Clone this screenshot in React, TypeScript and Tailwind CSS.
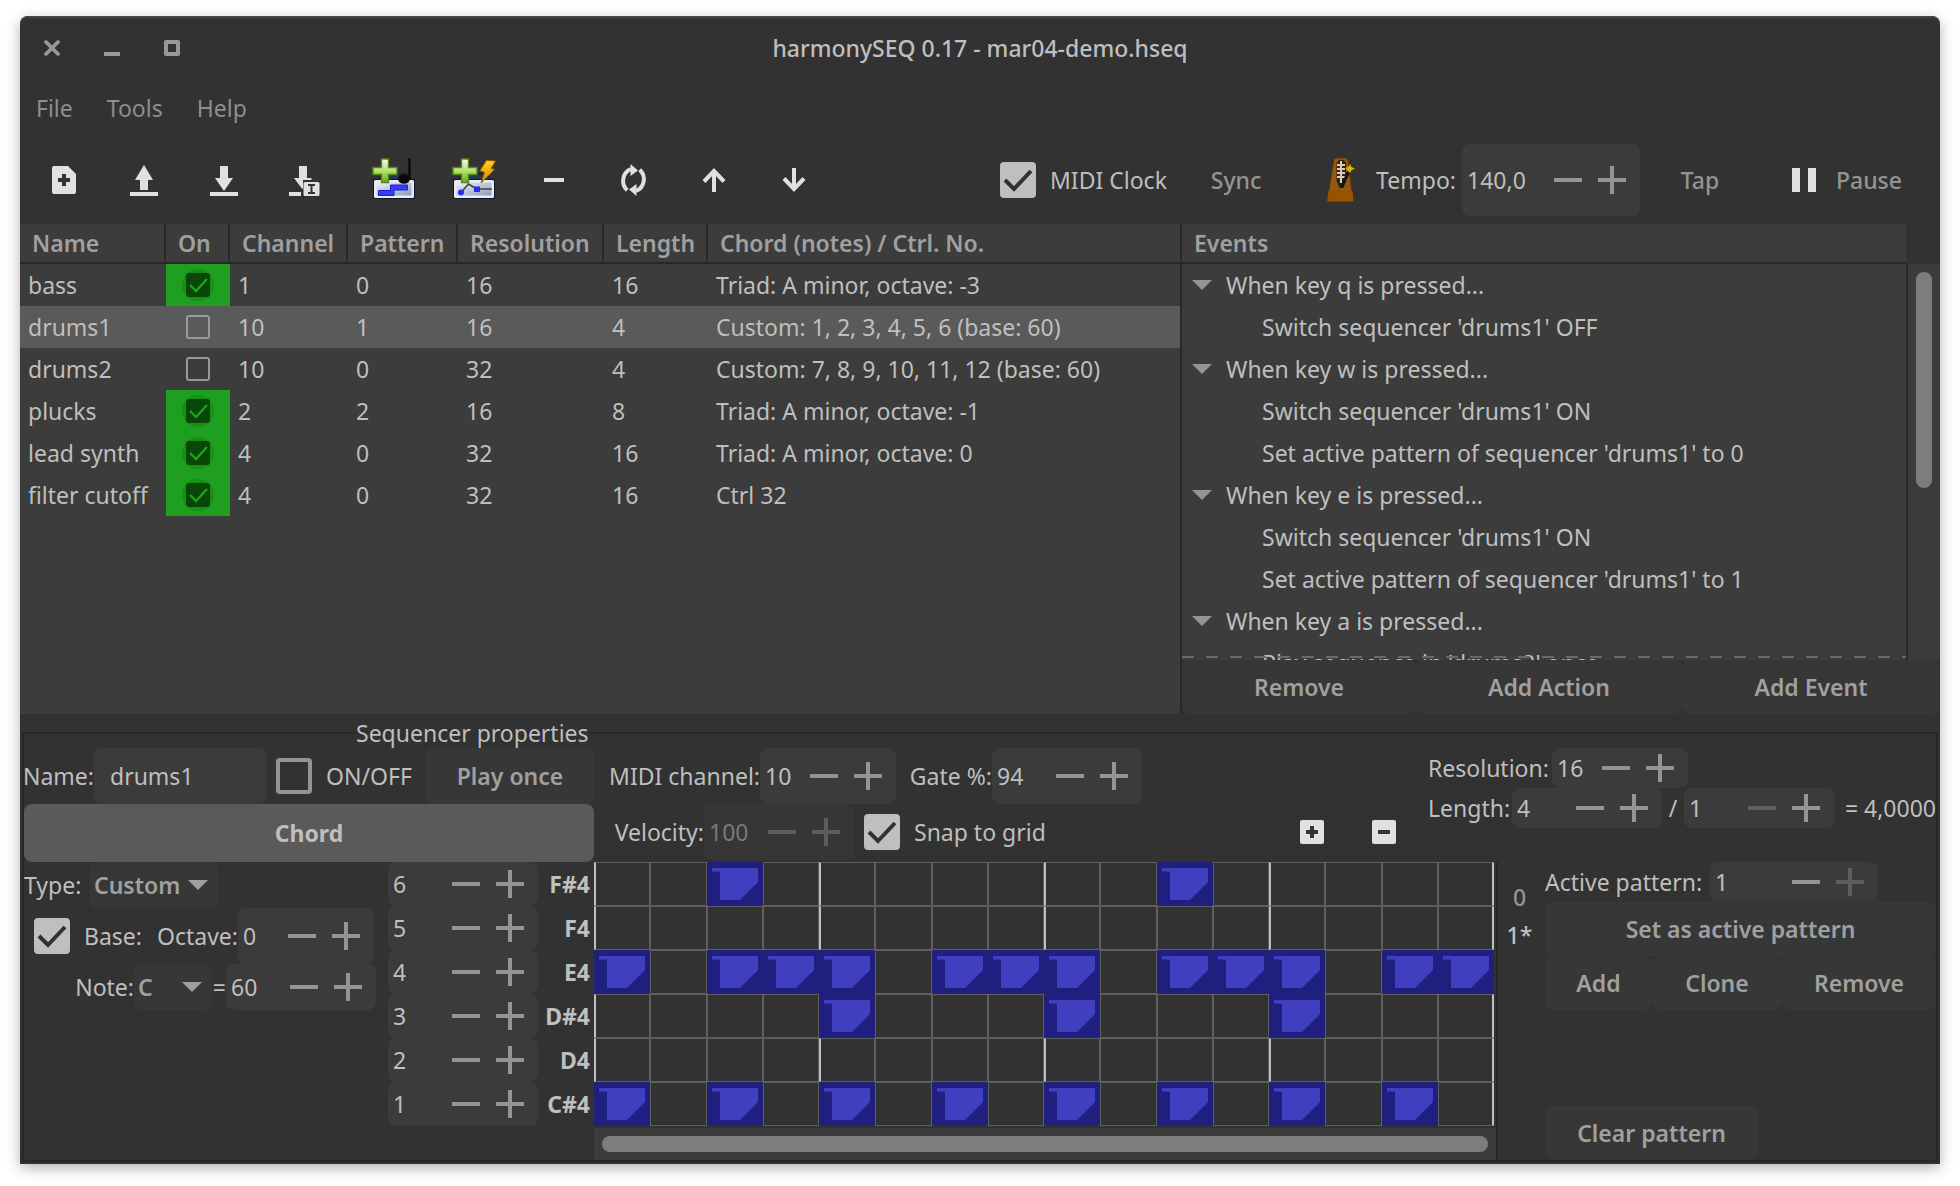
import React from 'react';

type Sequencer = {
  name: string;
  on: boolean;
  channel: string;
  pattern: string;
  resolution: string;
  length: string;
  chord: string;
};

const sequencers: Sequencer[] = [
  { name: 'bass', on: true, channel: '1', pattern: '0', resolution: '16', length: '16', chord: 'Triad: A minor, octave: -3' },
  { name: 'drums1', on: false, channel: '10', pattern: '1', resolution: '16', length: '4', chord: 'Custom: 1, 2, 3, 4, 5, 6 (base: 60)' },
  { name: 'drums2', on: false, channel: '10', pattern: '0', resolution: '32', length: '4', chord: 'Custom: 7, 8, 9, 10, 11, 12 (base: 60)' },
  { name: 'plucks', on: true, channel: '2', pattern: '2', resolution: '16', length: '8', chord: 'Triad: A minor, octave: -1' },
  { name: 'lead synth', on: true, channel: '4', pattern: '0', resolution: '32', length: '16', chord: 'Triad: A minor, octave: 0' },
  { name: 'filter cutoff', on: true, channel: '4', pattern: '0', resolution: '32', length: '16', chord: 'Ctrl 32' },
];

const events = [
  { title: 'When key q is pressed...', actions: ["Switch sequencer 'drums1' OFF"] },
  { title: 'When key w is pressed...', actions: ["Switch sequencer 'drums1' ON", "Set active pattern of sequencer 'drums1' to 0"] },
  { title: 'When key e is pressed...', actions: ["Switch sequencer 'drums1' ON", "Set active pattern of sequencer 'drums1' to 1"] },
  { title: 'When key a is pressed...', actions: ["Play sequence in 'drums2' once"] },
];

const noteRows = [
  { value: '6', label: 'F#4', steps: [2, 10] },
  { value: '5', label: 'F4', steps: [] },
  { value: '4', label: 'E4', steps: [0, 2, 3, 4, 6, 7, 8, 10, 11, 12, 14, 15] },
  { value: '3', label: 'D#4', steps: [4, 8, 12] },
  { value: '2', label: 'D4', steps: [] },
  { value: '1', label: 'C#4', steps: [0, 2, 4, 6, 8, 10, 12, 14] },
] as { value: string; label: string; steps: number[] }[];

function Spin({
  id,
  value,
  className,
  disabled = false,
  minusOff = false,
  plusOff = false,
  label,
}: {
  id: string;
  value: string;
  className: string;
  disabled?: boolean;
  minusOff?: boolean;
  plusOff?: boolean;
  label?: string;
}) {
  return (
    <div className={`flex shrink-0 items-center rounded-lg pr-1.5 ${disabled ? 'bg-[#363636]' : 'bg-[#3b3b3b]'} ${className}`}>
      <input
        id={id}
        type="text"
        defaultValue={value}
        disabled={disabled}
        aria-label={label}
        className="w-0 min-w-0 flex-1 bg-transparent pl-[5px] text-[#bfbfbf] outline-none disabled:text-[#7a7a7a]"
      />
      <button
        type="button"
        aria-label="Decrease"
        disabled={disabled || minusOff}
        className="grid h-full w-11 place-items-center text-[#949494] disabled:text-[#5e5e5e]"
      >
        <svg width="28" height="28" viewBox="0 0 28 28" fill="currentColor"><path d="M0 12h28v4H0z" /></svg>
      </button>
      <button
        type="button"
        aria-label="Increase"
        disabled={disabled || plusOff}
        className="grid h-full w-11 place-items-center text-[#949494] disabled:text-[#5e5e5e]"
      >
        <svg width="28" height="28" viewBox="0 0 28 28" fill="currentColor"><path d="M12 0h4v12h12v4H16v12h-4V16H0v-4h12z" /></svg>
      </button>
    </div>
  );
}

function Label({
  htmlFor,
  className,
  start = false,
  children,
}: {
  htmlFor: string;
  className: string;
  start?: boolean;
  children: React.ReactNode;
}) {
  return (
    <label htmlFor={htmlFor} className={`flex shrink-0 whitespace-nowrap ${start ? 'justify-start' : 'justify-end'} ${className}`}>
      {children}
    </label>
  );
}

function Check({ id, checked }: { id: string; checked: boolean }) {
  return (
    <span className="relative block size-9 shrink-0">
      <input
        id={id}
        type="checkbox"
        defaultChecked={checked}
        className="peer block size-9 appearance-none rounded-[4px] border-4 border-[#949494] checked:border-[#bfbfbf] checked:bg-[#bfbfbf]"
      />
      <svg className="pointer-events-none absolute inset-0 hidden peer-checked:block" width="36" height="36" viewBox="0 0 36 36" fill="none">
        <path d="M5 18l9 9L31 9" stroke="#323232" strokeWidth="4" />
      </svg>
    </span>
  );
}

function RowCheck({ name, checked }: { name: string; checked: boolean }) {
  return (
    <span className={`mx-auto grid size-8 place-items-center rounded-full ${checked ? 'bg-[#178f17]' : ''}`}>
      <span className="relative block size-6">
        <input
          type="checkbox"
          aria-label={`${name} on`}
          defaultChecked={checked}
          className="peer block size-6 appearance-none rounded-[3px] border-2 border-[#999999] checked:border-[#084708] checked:bg-[#084708]"
        />
        <svg className="pointer-events-none absolute inset-0 hidden peer-checked:block" width="24" height="24" viewBox="0 0 24 24" fill="none">
          <path d="M4 12l6 6L21 6" stroke="#1f9f1f" strokeWidth="2.4" />
        </svg>
      </span>
    </span>
  );
}

function Combo({ id, options, className }: { id: string; options: string[]; className: string }) {
  return (
    <span className={`relative block shrink-0 ${className}`}>
      <select id={id} className="block h-full w-full appearance-none rounded-lg bg-[#373737] pl-1 font-semibold text-[#a0a0a0] outline-none">
        {options.map((o) => (
          <option key={o}>{o}</option>
        ))}
      </select>
      <svg className="pointer-events-none absolute top-1/2 right-2.5 -translate-y-1/2" width="20" height="10" viewBox="0 0 20 10" fill="#a0a0a0">
        <path d="M0 0h20L10 10z" />
      </svg>
    </span>
  );
}

function FlatButton({ className, children }: { className: string; children: React.ReactNode }) {
  return (
    <button type="button" className={`rounded-lg bg-[#373737] font-semibold whitespace-nowrap text-[#a0a0a0] ${className}`}>
      {children}
    </button>
  );
}

const greenCross = 'M11.5 3h7v8.500h8.500v7h-8.500v8h-7v-8H3v-7h8.500z';

function Defs() {
  return (
    <svg width="0" height="0" className="absolute" aria-hidden="true">
      <defs>
        <linearGradient id="cross" x1="0" y1="0" x2="0" y2="1">
          <stop offset="0" stopColor="#f4fbe6" />
          <stop offset="0.5" stopColor="#b9e070" />
          <stop offset="1" stopColor="#66a818" />
        </linearGradient>
        <linearGradient id="panel" x1="0" y1="0" x2="1" y2="1">
          <stop offset="0" stopColor="#eef1f6" />
          <stop offset="1" stopColor="#8d9cb8" />
        </linearGradient>
        <linearGradient id="bolt" x1="0" y1="0" x2="0" y2="1">
          <stop offset="0" stopColor="#ffd91a" />
          <stop offset="1" stopColor="#d97a00" />
        </linearGradient>
      </defs>
    </svg>
  );
}

const SequencerPanel = () => (
  <>
    <path d="M8 24l4-6h25l4 6z" fill="#26374f" stroke="#111a28" />
    <rect x="3" y="23" width="42" height="20" rx="2" fill="#0e1724" />
    <rect x="4" y="24" width="40" height="18" rx="1.500" fill="#e9ecf2" />
    <rect x="6.500" y="26.500" width="35" height="13" fill="url(#panel)" />
  </>
);

const toolIcons: { label: string; icon: React.ReactNode; className: string }[] = [
  {
    label: 'New',
    className: '',
    icon: (
      <svg width="24" height="28" viewBox="0 0 24 28" fill="#e0e0e0">
        <path fillRule="evenodd" d="M2 0h14l8 8v18a2 2 0 0 1-2 2H2a2 2 0 0 1-2-2V2a2 2 0 0 1 2-2zM10 8v4H6v4h4v4h4v-4h4v-4h-4V8z" />
      </svg>
    ),
  },
  {
    label: 'Open',
    className: '',
    icon: (
      <svg width="28" height="32" viewBox="0 0 28 32" fill="#e0e0e0">
        <path d="M14 1l9 15h-5v10h-8V16H5zM0 28h28v4H0z" />
      </svg>
    ),
  },
  {
    label: 'Save',
    className: '',
    icon: (
      <svg width="28" height="32" viewBox="0 0 28 32" fill="#e0e0e0">
        <path d="M10 2h8v12h5l-9 13-9-13h5zM0 28h28v4H0z" />
      </svg>
    ),
  },
  {
    label: 'Save as',
    className: '',
    icon: (
      <svg width="32" height="32" viewBox="0 0 32 32" fill="#e0e0e0">
        <path d="M11 2h8v12h4.500v2H15v9l-1.500-1L6 14h5zM1 28h12v4H1z" />
        <path fillRule="evenodd" d="M17 18h13a1.500 1.500 0 0 1 1.500 1.500v11a1.500 1.500 0 0 1-1.500 1.500H17a1.500 1.500 0 0 1-1.500-1.500v-11A1.500 1.500 0 0 1 17 18zM20 20v2h2.500v6H20v2h7v-2h-2.500v-6H27v-2z" />
      </svg>
    ),
  },
  {
    label: 'Add sequencer',
    className: 'ml-2.5',
    icon: (
      <svg width="48" height="48" viewBox="0 0 48 48">
        <SequencerPanel />
        <path d="M8.500 34.500h12v-5.500h17v5h-13.500v5.500H8.500z" fill="#3a3cf5" stroke="#1a1cd8" />
        <path d="M39.500 2v21" stroke="#0a0a0a" strokeWidth="2.400" />
        <ellipse cx="34" cy="23" rx="6" ry="4.800" fill="#0a0a0a" />
        <path d={greenCross} fill="url(#cross)" stroke="#4e8a1c" strokeWidth="1.400" />
      </svg>
    ),
  },
  {
    label: 'Add control sequencer',
    className: '',
    icon: (
      <svg width="48" height="48" viewBox="0 0 48 48">
        <SequencerPanel />
        <path d="M11 36.500L18.500 28l8 5H42" fill="none" stroke="#3c3f45" strokeWidth="1.600" />
        <circle cx="11" cy="36.500" r="3" fill="#2a2cf5" />
        <rect x="24" y="30.500" width="6" height="5.500" fill="#2a2cf5" />
        <path d="M36.500 4.500l9 .5-4.500 7.500 3.500 1-13.500 13.500 3.500-10.500-4.500-2z" fill="url(#bolt)" stroke="#a85a00" />
        <path d={greenCross} fill="url(#cross)" stroke="#4e8a1c" strokeWidth="1.400" />
      </svg>
    ),
  },
  {
    label: 'Remove',
    className: '',
    icon: <svg width="20" height="4" viewBox="0 0 20 4" fill="#e0e0e0"><path d="M0 0h20v4H0z" /></svg>,
  },
  {
    label: 'Clone',
    className: '',
    icon: (
      <svg width="32" height="32" viewBox="0 0 32 32" fill="none">
        <path d="M9.300 26.300A12.800 12.800 0 0 1 13 5" stroke="#e0e0e0" strokeWidth="4" />
        <path d="M21.700 5.700A12.800 12.800 0 0 1 18 27" stroke="#e0e0e0" strokeWidth="4" />
        <path d="M12.500 0l7.500 6.500-7.500 5.500z" fill="#e0e0e0" />
        <path d="M18.500 32l-7.500-6.500 7.500-5.500z" fill="#e0e0e0" />
      </svg>
    ),
  },
  {
    label: 'Move up',
    className: '',
    icon: (
      <svg width="24" height="24" viewBox="0 0 24 24" fill="none" stroke="#e0e0e0" strokeWidth="4">
        <path d="M12 24V3M2 13.500L12 3l10 10.500" />
      </svg>
    ),
  },
  {
    label: 'Move down',
    className: '',
    icon: (
      <svg width="24" height="24" viewBox="0 0 24 24" fill="none" stroke="#e0e0e0" strokeWidth="4">
        <path d="M12 0v21M2 10.500L12 21l10-10.500" />
      </svg>
    ),
  },
];

function TitleBar() {
  return (
    <header className="grid h-16 grid-cols-[1fr_auto_1fr] items-center rounded-t-lg border-t-2 border-[#484848] px-6 pb-0.5">
      <div className="flex gap-11">
        <button type="button" aria-label="Close">
          <svg width="16" height="16" viewBox="0 0 16 16" stroke="#999999" strokeWidth="3.600" strokeLinecap="round"><path d="M2 2l12 12M14 2L2 14" /></svg>
        </button>
        <button type="button" aria-label="Minimize">
          <svg width="16" height="16" viewBox="0 0 16 16" fill="#999999"><path d="M0 12h16v4H0z" /></svg>
        </button>
        <button type="button" aria-label="Maximize">
          <svg width="16" height="16" viewBox="0 0 16 16" fill="none"><rect x="2" y="2" width="12" height="12" stroke="#999999" strokeWidth="4" strokeLinejoin="round" /></svg>
        </button>
      </div>
      <h1 className="font-medium text-[#bfbfbf]">harmonySEQ 0.17 - mar04-demo.hseq</h1>
    </header>
  );
}

function Toolbar() {
  return (
    <div className="flex h-[88px] items-center justify-between pl-1">
      <div className="flex">
        {toolIcons.map((t) => (
          <button key={t.label} type="button" aria-label={t.label} className={`grid h-16 w-20 place-items-center ${t.className}`}>
            {t.icon}
          </button>
        ))}
      </div>
      <div className="flex items-center">
        <div className="flex w-[184px] items-center gap-3.5">
          <Check id="midi-clock" checked />
          <label htmlFor="midi-clock" className="whitespace-nowrap">MIDI Clock</label>
        </div>
        <button type="button" className="h-16 w-[104px] font-medium text-[#949494]">Sync</button>
        <button type="button" aria-label="Metronome" className="mr-[22px] ml-9">
          <svg width="32" height="48" viewBox="0 0 32 48">
            <path d="M10 3.500L12 2h9l3 1.500 5 42H3z" fill="#94580f" stroke="#5f3606" />
            <path d="M4.500 35h24l1 10.500H3.500z" fill="#9a5200" />
            <path d="M12.500 7l2.500-3h5L22 7v17l-2.500 8h-4L12.500 25z" fill="#2e2418" />
            <path d="M17 5v22M13 9h8M13 13h8M13 17h8M13 21h8" stroke="#dccbb8" strokeWidth="2" />
            <path d="M17.500 31l7.500-16" stroke="#141414" strokeWidth="3" />
            <path d="M26 8l1.500 3 3.500 1.500-3.500 1.700L26 17l-3-3-1.500-2 3-1.500z" fill="#d6b400" />
          </svg>
        </button>
        <Label htmlFor="tempo" className="mr-1.5 w-[78px]">Tempo:</Label>
        <Spin id="tempo" value="140,0" className="h-[72px] w-[178px]" />
        <button type="button" className="h-16 w-[120px] font-medium text-[#949494]">Tap</button>
        <button type="button" className="flex h-16 w-[180px] items-center gap-5 pl-8 font-medium text-[#949494]">
          <svg width="24" height="24" viewBox="0 0 24 24" fill="#e0e0e0"><path d="M0 0h8v24H0zM16 0h8v24h-8z" /></svg>
          Pause
        </button>
      </div>
    </div>
  );
}

function SequencerTable() {
  const head = ['Name', 'On', 'Channel', 'Pattern', 'Resolution', 'Length', 'Chord (notes) / Ctrl. No.'];
  return (
    <div className="min-w-0 flex-1 border-r-2 border-[#282828] bg-[#3c3c3c]">
      <table className="w-full table-fixed border-separate border-spacing-0 text-left whitespace-nowrap">
        <colgroup>
          <col className="w-[146px]" />
          <col className="w-16" />
          <col className="w-[118px]" />
          <col className="w-[110px]" />
          <col className="w-[146px]" />
          <col className="w-[104px]" />
          <col />
        </colgroup>
        <thead>
          <tr className="h-10">
            {head.map((h, i) => (
              <th key={h} scope="col" className={`border-b-2 border-[#282828] py-0 pl-3 font-semibold text-[#a0a0a0] ${i < 6 ? 'border-r-2' : ''}`}>
                {h}
              </th>
            ))}
          </tr>
        </thead>
        <tbody>
          {sequencers.map((s) => (
            <tr key={s.name} className={`h-[42px] ${s.name === 'drums1' ? 'bg-[#5a5a5a]' : ''}`}>
              <td className="p-0 pl-2">{s.name}</td>
              <td className={`p-0 ${s.on ? 'bg-[#1f9f1f]' : ''}`}><RowCheck name={s.name} checked={s.on} /></td>
              <td className="p-0 pl-2">{s.channel}</td>
              <td className="p-0 pl-2">{s.pattern}</td>
              <td className="p-0 pl-2">{s.resolution}</td>
              <td className="p-0 pl-2">{s.length}</td>
              <td className="p-0 pl-2">{s.chord}</td>
            </tr>
          ))}
        </tbody>
      </table>
    </div>
  );
}

function EventsPanel() {
  return (
    <aside className="flex w-[758px] shrink-0 flex-col">
      <h2 className="mr-[34px] flex h-[38px] items-center bg-[#3c3c3c] pl-3 font-semibold text-[#a0a0a0]">Events</h2>
      <div className="mr-[34px] h-0.5 bg-[#282828]" />
      <div className="flex min-h-[396px] flex-1 basis-0 overflow-hidden bg-[#3c3c3c]">
        <div className="relative h-[396px] flex-1 overflow-hidden border-r-2 border-[#2a2a2a]">
          <ul>
            {events.map((e) => (
              <li key={e.title}>
                <button type="button" className="flex h-[42px] items-center gap-3.5 pl-2.5">
                  <svg width="20" height="10" viewBox="0 0 20 10" fill="#949494"><path d="M0 0h20L10 10z" /></svg>
                  {e.title}
                </button>
                <ul>
                  {e.actions.map((a) => (
                    <li key={a} className="flex h-[42px] items-center pl-20 whitespace-nowrap">{a}</li>
                  ))}
                </ul>
              </li>
            ))}
          </ul>
          <div className="absolute inset-x-0 bottom-0.5 h-0.5 bg-[repeating-linear-gradient(90deg,#696969_0_12px,transparent_12px_24px)]" />
        </div>
        <div className="w-8 px-2 pt-2">
          <div className="h-[216px] rounded-full bg-[#7d7d7d]" />
        </div>
      </div>
      <div className="flex h-[54px]">
        <FlatButton className="w-[234px]">Remove</FlatButton>
        <FlatButton className="w-[266px]">Add Action</FlatButton>
        <FlatButton className="flex-1">Add Event</FlatButton>
      </div>
    </aside>
  );
}

function PianoRoll() {
  return (
    <div className="min-w-0 flex-1">
      <div className="mr-0.5">
        {noteRows.map((row) => (
          <div key={row.label} className="grid h-11 grid-cols-[repeat(16,minmax(0,1fr))]">
            {Array.from({ length: 16 }, (_, i) => {
              const active = row.steps.includes(i);
              const edge =
                i % 4 === 0 ? 'border-l-2 border-l-[#c0c0c0]' : i === 15 ? 'border-r-2 border-r-[#c0c0c0]' : '';
              return (
                <button
                  key={i}
                  type="button"
                  aria-label={`${row.label} step ${i + 1}`}
                  aria-pressed={active}
                  className={
                    active
                      ? 'flex items-center rounded-[3px] bg-[#1f1f80] pl-[5px]'
                      : `border border-[#5f5f5f] ${edge}`
                  }
                >
                  {active && (
                    <svg width="47" height="34" viewBox="0 0 47 34">
                      <path d="M0 1h9v4H0z" fill="#33339f" />
                      <path d="M0 1h46v14L28 33H8V4H0z" fill="#403fc0" />
                    </svg>
                  )}
                </button>
              );
            })}
          </div>
        ))}
      </div>
      <div className="mt-0.5 h-8 bg-[#3c3c3c] p-2">
        <div className="h-4 rounded-full bg-[#7d7d7d]" />
      </div>
    </div>
  );
}

function Properties() {
  return (
    <fieldset className="mx-0.5 mt-1 border-2 border-[#272727]">
      <legend className="ml-[332px] leading-[30px]">Sequencer properties</legend>
      <div className="flex">
        <section className="w-[570px] shrink-0">
          <div className="flex h-14 items-center">
            <Label htmlFor="name" className="w-[70px]">Name:</Label>
            <input id="name" type="text" defaultValue="drums1" className="h-14 w-[172px] rounded-lg bg-[#3b3b3b] pl-4 text-[#bfbfbf] outline-none" />
            <div className="flex w-40 items-center gap-3.5 pl-2.5">
              <Check id="onoff" checked={false} />
              <label htmlFor="onoff" className="whitespace-nowrap">ON/OFF</label>
            </div>
            <FlatButton className="h-14 flex-1">Play once</FlatButton>
          </div>
          <button type="button" className="h-[58px] w-full rounded-lg bg-[#5a5a5a] font-bold">Chord</button>
          <div className="flex">
            <div className="w-[364px]">
              <div className="flex items-center">
                <Label htmlFor="type" start className="w-[66px]">Type:</Label>
                <Combo id="type" options={['Custom', 'Triad', 'Guitar']} className="h-[46px] w-32" />
              </div>
              <div className="flex items-center pl-2.5">
                <Check id="base" checked />
                <label htmlFor="base" className="w-[72px] pl-3.5">Base:</label>
                <Label htmlFor="octave" className="w-24">Octave:</Label>
                <Spin id="octave" value="0" className="h-14 w-[136px]" />
              </div>
              <div className="flex items-center">
                <Label htmlFor="note" className="w-[110px]">Note:</Label>
                <Combo id="note" options={['C', 'D', 'E']} className="h-[46px] w-[78px]" />
                <Label htmlFor="midi-note" className="w-3.5">=</Label>
                <Spin id="midi-note" value="60" className="h-[46px] w-[150px]" />
              </div>
            </div>
            <div className="flex-1">
              {noteRows.map((n) => (
                <div key={n.label} className="flex items-center">
                  <Spin id={`note-${n.value}`} value={n.value} label={`Note ${n.label}`} className="h-11 w-[150px]" />
                  <span className="flex-1 pr-1 text-right font-bold">{n.label}</span>
                </div>
              ))}
            </div>
          </div>
        </section>
        <section className="flex min-w-0 flex-1 flex-col">
          <div className="flex h-[114px]">
            <div className="min-w-0 flex-1">
              <div className="flex items-center">
                <Label htmlFor="midi-channel" className="w-[166px]">MIDI channel:</Label>
                <Spin id="midi-channel" value="10" className="h-14 w-[136px]" />
                <Label htmlFor="gate" className="w-24">Gate %:</Label>
                <Spin id="gate" value="94" className="h-14 w-[150px]" />
              </div>
              <div className="flex items-center">
                <Label htmlFor="velocity" className="w-[110px]">Velocity:</Label>
                <Spin id="velocity" value="100" disabled className="h-14 w-[150px]" />
                <div className="flex items-center gap-3.5 pl-2.5">
                  <Check id="snap" checked />
                  <label htmlFor="snap" className="whitespace-nowrap">Snap to grid</label>
                </div>
              </div>
            </div>
            <div className="mt-14 mr-2 flex h-14">
              <button type="button" aria-label="Expand grid" className="grid w-[72px] place-items-center">
                <svg width="24" height="24" viewBox="0 0 24 24"><rect width="24" height="24" rx="2" fill="#e0e0e0" /><path d="M10 6h4v4h4v4h-4v4h-4v-4H6v-4h4z" fill="#323232" /></svg>
              </button>
              <button type="button" aria-label="Shrink grid" className="grid w-[72px] place-items-center">
                <svg width="24" height="24" viewBox="0 0 24 24"><rect width="24" height="24" rx="2" fill="#e0e0e0" /><path d="M6 10h12v4H6z" fill="#323232" /></svg>
              </button>
            </div>
            <div className="w-[508px] shrink-0">
              <div className="flex items-center">
                <Label htmlFor="resolution" start className="w-[124px]">Resolution:</Label>
                <Spin id="resolution" value="16" className="h-10 w-[136px]" />
              </div>
              <div className="flex items-center">
                <Label htmlFor="length" start className="w-[84px]">Length:</Label>
                <Spin id="length" value="4" className="h-10 w-[150px]" />
                <span className="w-[22px] text-center">/</span>
                <Spin id="length-div" value="1" label="Length divisor" minusOff className="h-10 w-[150px]" />
                <span className="flex-1 text-right whitespace-nowrap">= 4,0000</span>
              </div>
            </div>
          </div>
          <div className="flex flex-1">
            <PianoRoll />
            <div className="flex w-[440px] shrink-0 border-l-2 border-[#272727]">
              <div className="flex w-[47px] flex-col pt-4 pr-1 font-medium">
                <button type="button" className="h-[38px] text-[#949494]">0</button>
                <button type="button" className="h-[38px]">1*</button>
              </div>
              <div className="flex flex-1 flex-col">
                <div className="flex items-center">
                  <Label htmlFor="active-pattern" start className="w-[165px]">Active pattern:</Label>
                  <Spin id="active-pattern" value="1" plusOff className="h-10 w-[168px]" />
                </div>
                <FlatButton className="h-[54px] w-full">Set as active pattern</FlatButton>
                <div className="flex h-[54px]">
                  <FlatButton className="w-[107px]">Add</FlatButton>
                  <FlatButton className="w-[130px]">Clone</FlatButton>
                  <FlatButton className="flex-1">Remove</FlatButton>
                </div>
                <FlatButton className="mt-auto h-[54px] w-[213px]">Clear pattern</FlatButton>
              </div>
            </div>
          </div>
        </section>
      </div>
    </fieldset>
  );
}

export default function App() {
  return (
    <div className="min-h-screen bg-white px-5 pt-4 pb-5 font-['Noto_Sans',sans-serif] text-[23px] leading-7 text-[#bfbfbf]">
      <Defs />
      <main className="min-w-[1800px] rounded-t-lg bg-[#323232] pb-0.5 shadow-[0_4px_14px_rgba(0,0,0,0.3)]">
        <TitleBar />
        <nav className="flex h-14 items-center gap-[34px] pl-4 text-[#8e8e8e]">
          <button type="button">File</button>
          <button type="button">Tools</button>
          <button type="button">Help</button>
        </nav>
        <Toolbar />
        <div className="flex">
          <SequencerTable />
          <EventsPanel />
        </div>
        <Properties />
      </main>
    </div>
  );
}
